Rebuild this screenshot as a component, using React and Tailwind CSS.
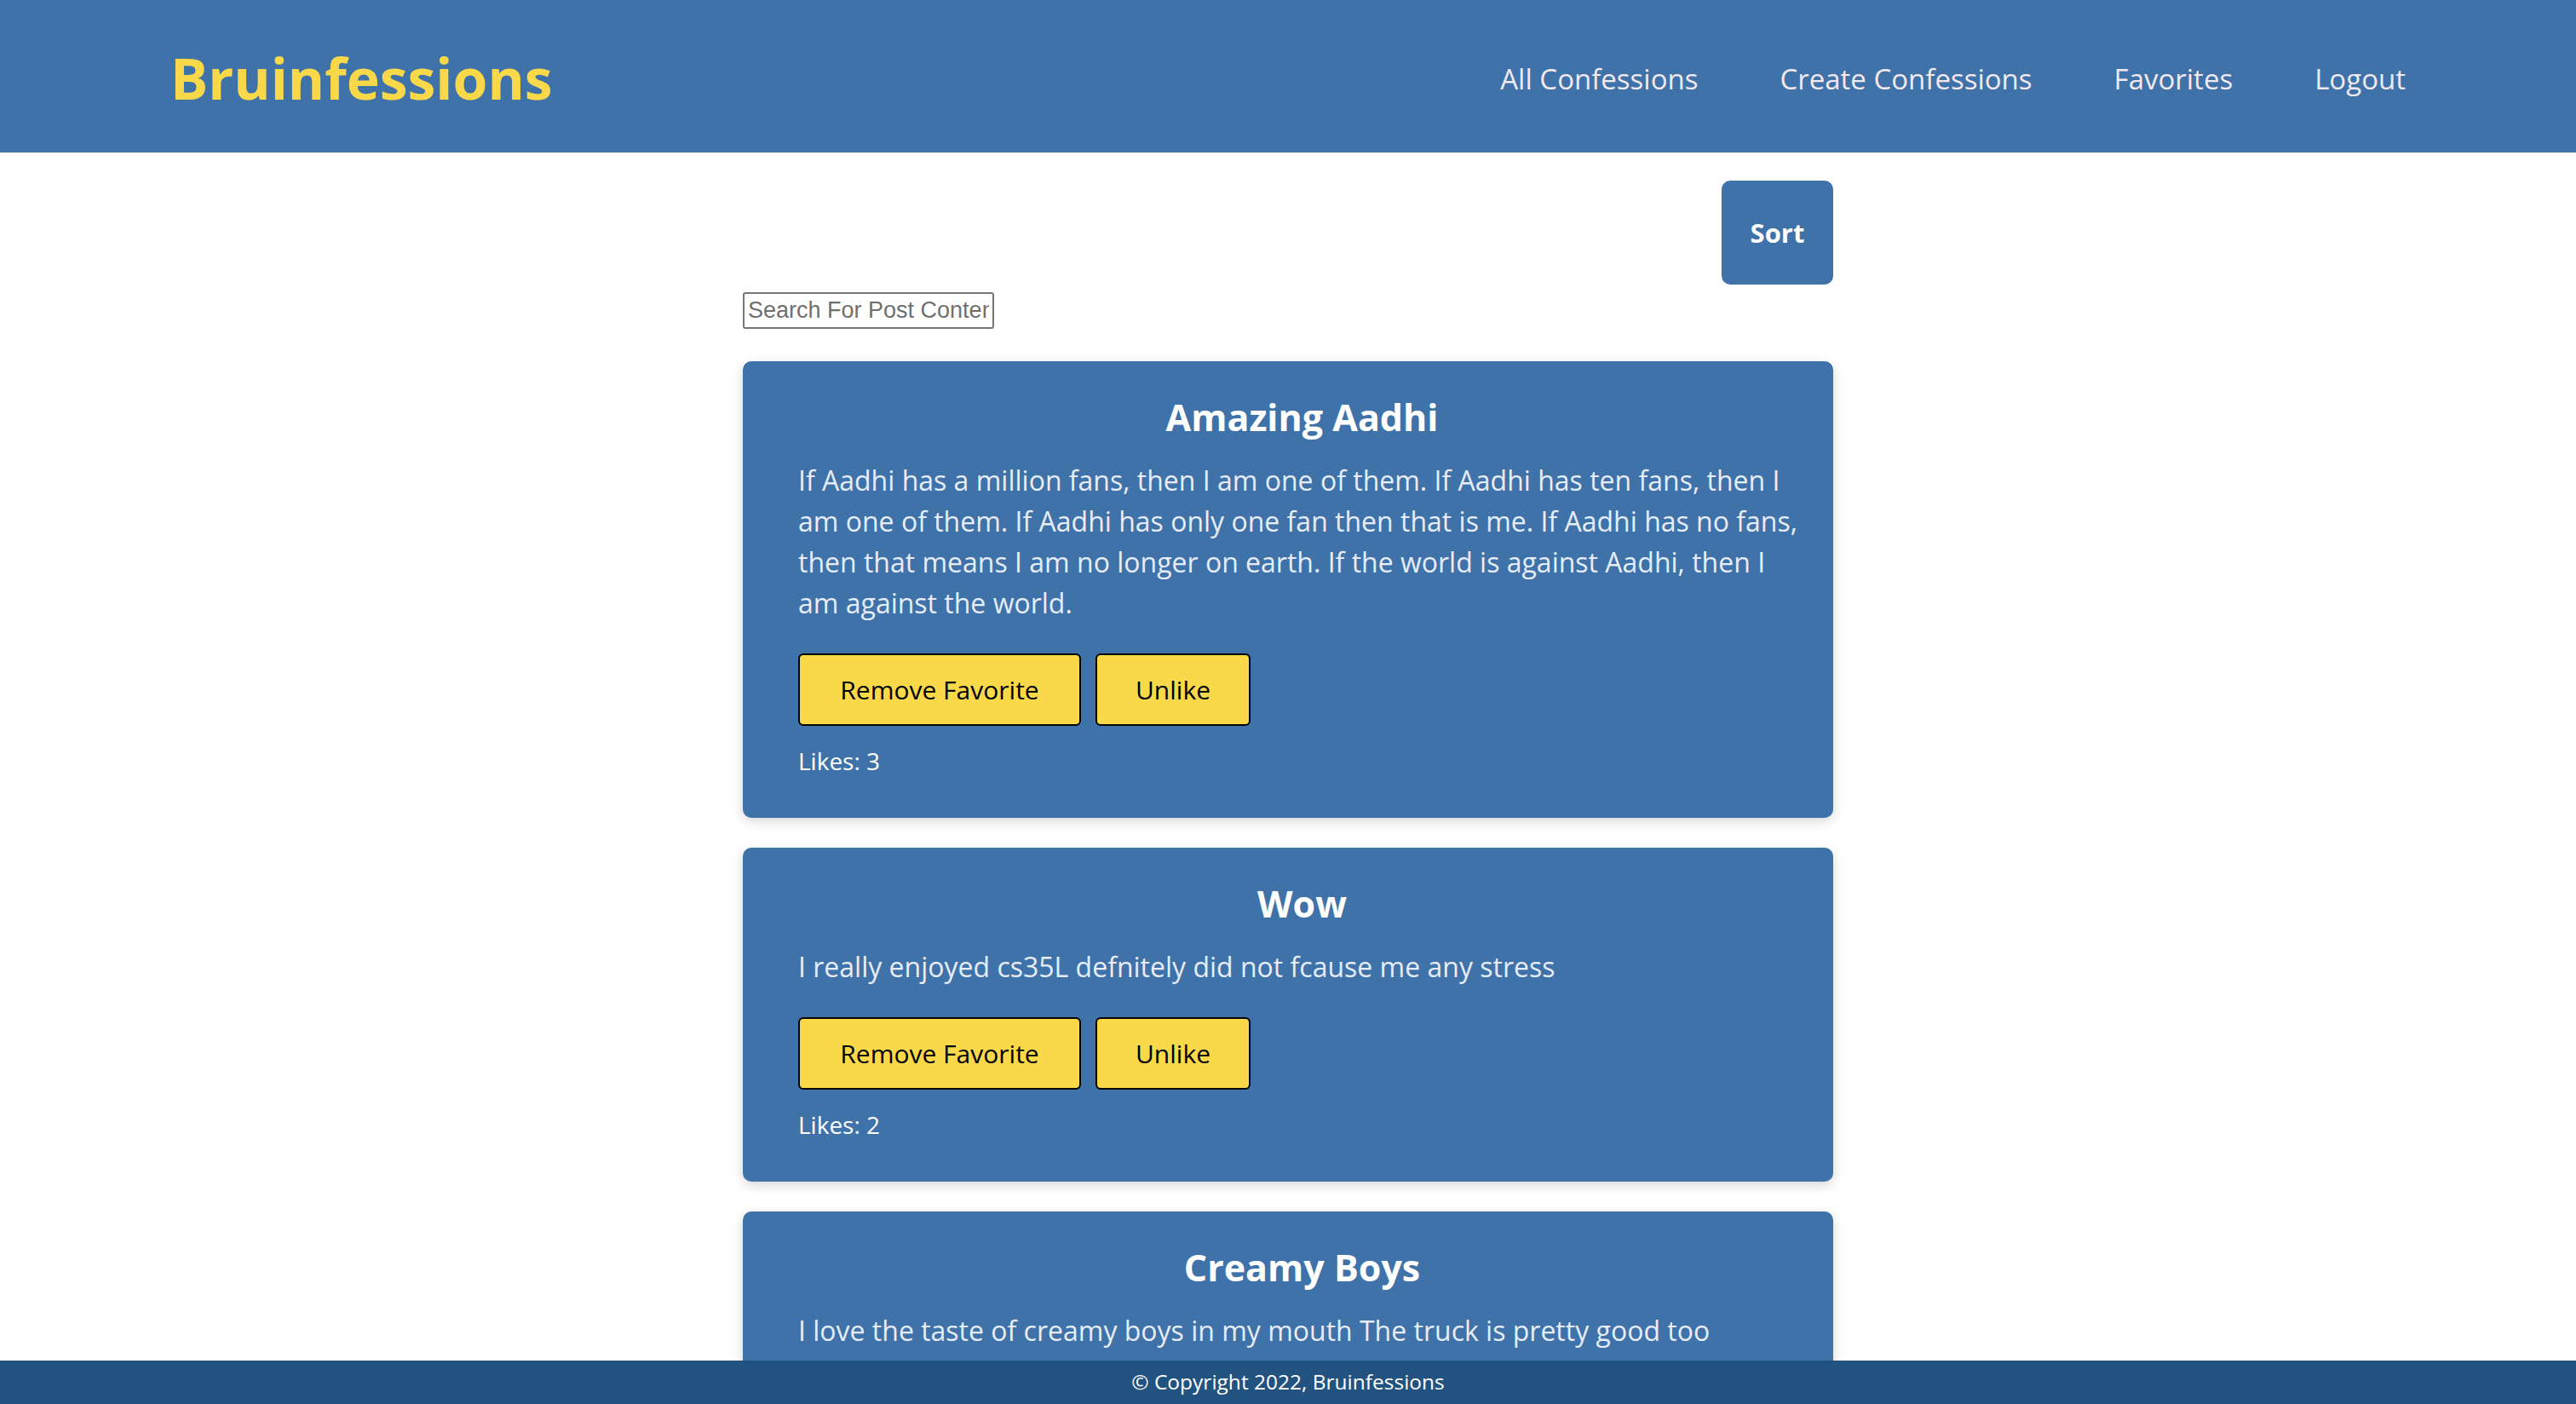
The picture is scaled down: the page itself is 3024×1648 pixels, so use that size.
import { useState } from 'react';

const posts = [
  {
    id: 1,
    title: 'Amazing Aadhi',
    body: 'If Aadhi has a million fans, then I am one of them. If Aadhi has ten fans, then I am one of them. If Aadhi has only one fan then that is me. If Aadhi has no fans, then that means I am no longer on earth. If the world is against Aadhi, then I am against the world.',
    likes: 3,
  },
  {
    id: 2,
    title: 'Wow',
    body: 'I really enjoyed cs35L defnitely did not fcause me any stress',
    likes: 2,
  },
  {
    id: 3,
    title: 'Creamy Boys',
    body: 'I love the taste of creamy boys in my mouth The truck is pretty good too',
    likes: 1,
  },
];

function PostCard({ post }) {
  return (
    <div className="bg-[#3f72a9] rounded-[10px] shadow-[0_4px_14px_rgba(0,0,0,0.16)] pl-[65px] pr-[32px] pt-[39px] pb-[46px]">
      <h2 className="text-center text-white font-bold text-[43px] leading-[53px]">{post.title}</h2>
      <p className="mt-[24px] text-[#e6edf8] text-[32px] leading-[48px]">{post.body}</p>
      <div className="mt-[35px] flex gap-[17px]">
        <button className="w-[332px] h-[85px] bg-[#f9d849] border-2 border-black rounded-[6px] text-black text-[30px]">
          Remove Favorite
        </button>
        <button className="w-[182px] h-[85px] bg-[#f9d849] border-2 border-black rounded-[6px] text-black text-[30px]">
          Unlike
        </button>
      </div>
      <p className="mt-[20px] text-white text-[28px] leading-[42px]">Likes: {post.likes}</p>
    </div>
  );
}

export default function App() {
  const [query, setQuery] = useState('');

  return (
    <div className="min-h-screen bg-white font-['Open_Sans',sans-serif]">
      {/* Header */}
      <header className="h-[179px] bg-[#3f72a9] flex items-center justify-between px-[200px]">
        <h1 className="pt-[3px] text-[66px] font-bold text-[#f9d849]">Bruinfessions</h1>
        <nav className="pt-[6px] flex gap-[96px] text-[33px] text-[#f1e9ef]">
          <a href="#">All Confessions</a>
          <a href="#">Create Confessions</a>
          <a href="#">Favorites</a>
          <a href="#">Logout</a>
        </nav>
      </header>

      {/* Posts */}
      <main className="w-[1280px] mx-auto pt-[33px] pb-[120px]">
        <div className="flex justify-end">
          <button className="w-[131px] h-[122px] rounded-[10px] bg-[#3f72a9] text-white font-bold text-[31px]">
            Sort
          </button>
        </div>
        <input
          value={query}
          onChange={(e) => setQuery(e.target.value)}
          placeholder="Search For Post Content"
          className="mt-[9px] block w-[295px] h-[43px] border-2 border-[#767676] rounded-[3px] px-[4px] text-[27px] font-['Liberation_Sans',sans-serif] placeholder:text-[#6f6f6f]"
        />
        <div className="mt-[38px] flex flex-col gap-[35px]">
          {posts.map((p) => <PostCard key={p.id} post={p} />)}
        </div>
      </main>

      <footer className="fixed bottom-0 inset-x-0 h-[51px] bg-[#22527f] flex items-center justify-center text-white text-[24.5px]">
        © Copyright 2022, Bruinfessions
      </footer>
    </div>
  );
}
